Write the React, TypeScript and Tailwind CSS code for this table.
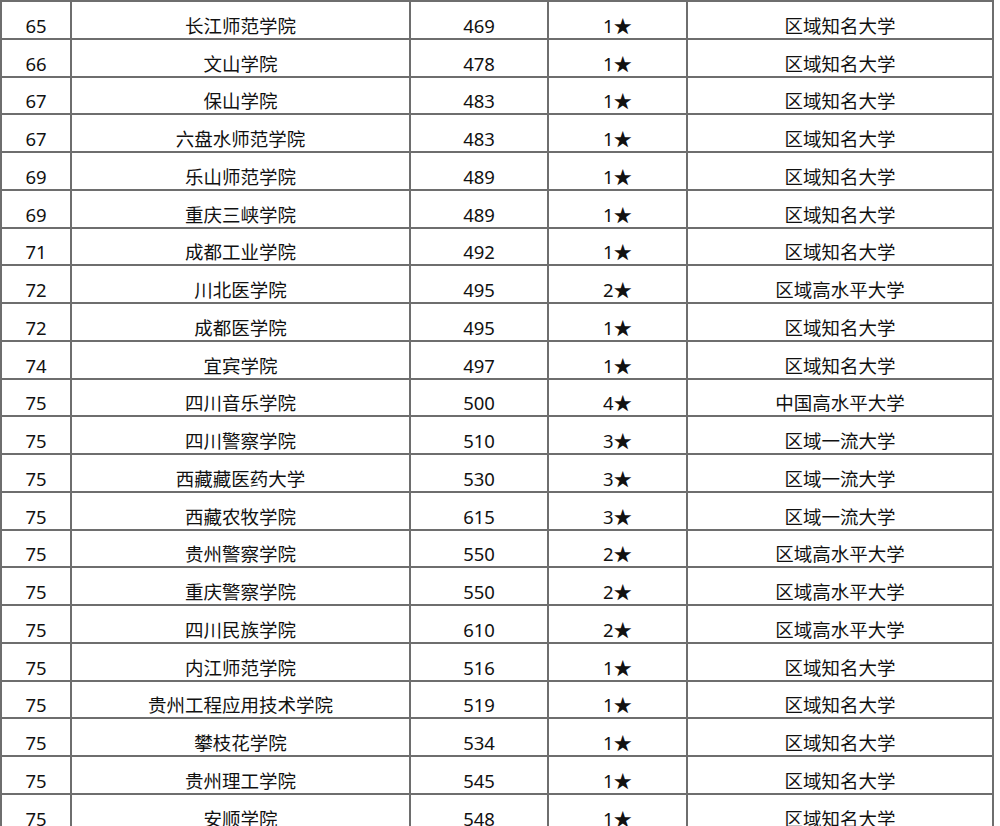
import React from "react";

const rows: [string, string, string, string, string][] = [
  ["65", "长江师范学院", "469", "1★", "区域知名大学"],
  ["66", "文山学院", "478", "1★", "区域知名大学"],
  ["67", "保山学院", "483", "1★", "区域知名大学"],
  ["67", "六盘水师范学院", "483", "1★", "区域知名大学"],
  ["69", "乐山师范学院", "489", "1★", "区域知名大学"],
  ["69", "重庆三峡学院", "489", "1★", "区域知名大学"],
  ["71", "成都工业学院", "492", "1★", "区域知名大学"],
  ["72", "川北医学院", "495", "2★", "区域高水平大学"],
  ["72", "成都医学院", "495", "1★", "区域知名大学"],
  ["74", "宜宾学院", "497", "1★", "区域知名大学"],
  ["75", "四川音乐学院", "500", "4★", "中国高水平大学"],
  ["75", "四川警察学院", "510", "3★", "区域一流大学"],
  ["75", "西藏藏医药大学", "530", "3★", "区域一流大学"],
  ["75", "西藏农牧学院", "615", "3★", "区域一流大学"],
  ["75", "贵州警察学院", "550", "2★", "区域高水平大学"],
  ["75", "重庆警察学院", "550", "2★", "区域高水平大学"],
  ["75", "四川民族学院", "610", "2★", "区域高水平大学"],
  ["75", "内江师范学院", "516", "1★", "区域知名大学"],
  ["75", "贵州工程应用技术学院", "519", "1★", "区域知名大学"],
  ["75", "攀枝花学院", "534", "1★", "区域知名大学"],
  ["75", "贵州理工学院", "545", "1★", "区域知名大学"],
  ["75", "安顺学院", "548", "1★", "区域知名大学"],
];

const cell =
  "flex items-end justify-center pb-0 border-r-2 border-b-2 border-[#6e6e6e] leading-[24px] whitespace-nowrap";

export default function App() {
  return (
    <div
      className="w-[1000px] h-[826px] overflow-hidden bg-white text-[18.5px] text-[#111]"
      style={{ fontFamily: '"Noto Sans", "Noto Sans CJK SC", sans-serif' }}
    >
      <div className="w-[994px] border-t-2 border-l-2 border-[#6e6e6e]">
        {rows.map((r, i) => (
          <div
            key={i}
            className="grid grid-cols-[70px_339px_138px_139px_306px] h-[37.75px]"
          >
            <div className={cell}>{r[0]}</div>
            <div className={cell}>{r[1]}</div>
            <div className={cell}>{r[2]}</div>
            <div className={cell}>{r[3]}</div>
            <div className={cell}>{r[4]}</div>
          </div>
        ))}
      </div>
    </div>
  );
}
